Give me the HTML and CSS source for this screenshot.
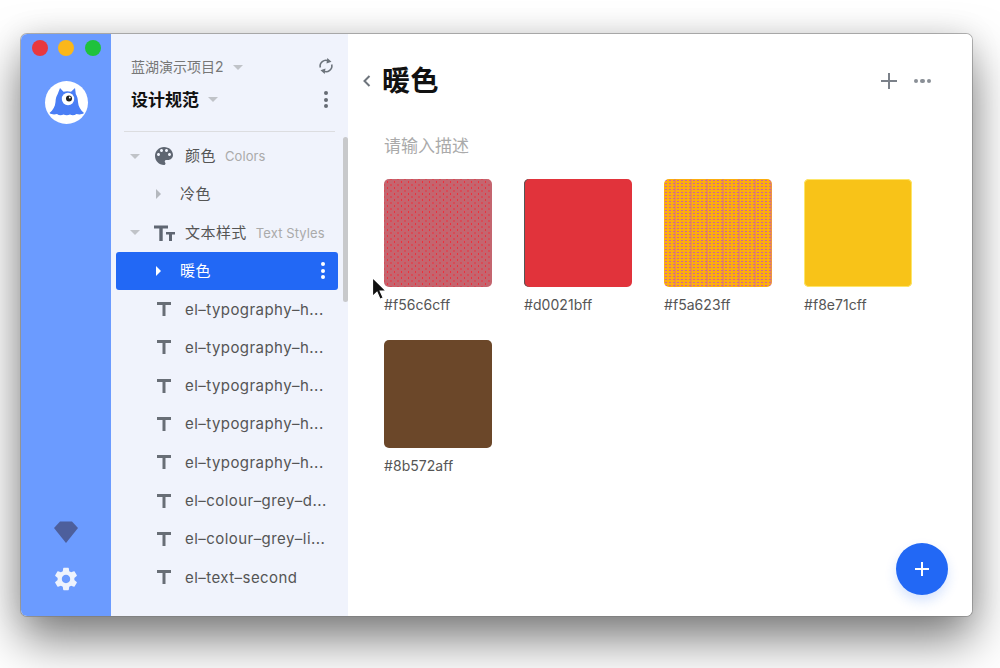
FILE: index.html
```html
<!DOCTYPE html>
<html lang="zh">
<head>
<meta charset="utf-8">
<title>暖色</title>
<link rel="stylesheet" href="styles.css">
</head>
<body>
<div class="window">
  <aside class="rail">
    <div class="lights"><i class="light red"></i><i class="light yellow"></i><i class="light green"></i></div>
    <div class="logo">
      <svg width="43" height="43" viewBox="0 0 43 43"><path fill="#4a7ef5" d="M15 7l3.500 3.800c2.500-.8 5-.8 7.500 0L30 7l.8 6c1.600 2.500 2 5 2.200 8 .3 4.500 2.500 8 6 11-2 1.600-5 1.800-7.500 1-2.200 1.500-4.500 1.500-6.500.5-2 1-4.500 1-6.500 0-2.200 1-4.500 1-6.500-.5-2.500.8-5.500.6-7.500-1 3.500-3 5.700-6.500 6-11 .2-3 .6-5.500 2.200-8z"/><circle cx="23" cy="18" r="6.200" fill="#fff"/><circle cx="24" cy="17.500" r="3" fill="#222"/><circle cx="24.800" cy="16.500" r=".9" fill="#fff"/></svg>
    </div>
    <div class="rail-foot">
      <svg width="26" height="24" viewBox="0 0 26 24"><path fill="#4d5f9c" d="M7 1.500h12L25 8 13 23 1 8z"/></svg>
      <svg width="28" height="28" viewBox="0 0 24 24"><path fill="#eef3fd" d="M19.140 12.940c.04-.3.06-.61.06-.94 0-.32-.02-.64-.07-.94l2.030-1.580c.18-.14.23-.41.12-.61l-1.920-3.320c-.12-.22-.37-.29-.59-.22l-2.390.96c-.5-.38-1.030-.7-1.620-.94l-.36-2.540c-.04-.24-.24-.41-.48-.41h-3.840c-.24 0-.43.17-.47.41l-.36 2.540c-.59.24-1.130.57-1.620.94l-2.390-.96c-.22-.08-.47 0-.59.22L2.740 8.870c-.12.21-.08.47.12.61l2.030 1.580c-.05.3-.09.63-.09.94s.02.64.07.94l-2.030 1.580c-.18.14-.23.41-.12.61l1.920 3.320c.12.22.37.29.59.22l2.390-.96c.5.38 1.030.7 1.620.94l.36 2.540c.05.24.24.41.48.41h3.840c.24 0 .44-.17.47-.41l.36-2.540c.59-.24 1.130-.56 1.620-.94l2.390.96c.22.08.47 0 .59-.22l1.920-3.320c.12-.22.07-.47-.12-.61l-2.010-1.580zM12 15.600c-1.980 0-3.600-1.620-3.600-3.600s1.620-3.600 3.600-3.600 3.600 1.620 3.600 3.600-1.620 3.600-3.600 3.600z"/></svg>
    </div>
  </aside>

  <nav class="side">
    <div class="side-head">
      <div class="project">
        <span class="project-name">蓝湖演示项目2</span><i class="caret-down"></i>
        <svg class="push sync" width="16" height="16" viewBox="0 0 16 16"><path d="M2.300 9.500A5.800 5.800 0 0 1 10.500 2.900M13.700 6.500A5.800 5.800 0 0 1 5.500 13.100" fill="none" stroke="#6d747c" stroke-width="1.600"/><path d="M9.300 0l4.200 3.800-5 1.700zM6.700 16l-4.200-3.800 5-1.700z" fill="#6d747c"/></svg>
      </div>
      <div class="spec">
        <span class="spec-name">设计规范</span><i class="caret-down"></i>
        <span class="kebab push"><i></i><i></i><i></i></span>
      </div>
    </div>
    <div class="tree">
      <div class="row">
        <span class="slot-caret"><i class="caret-down"></i></span>
        <svg class="slot-icon" width="24" height="24" viewBox="0 0 24 24"><path fill="#5f6672" d="M12 3c-4.970 0-9 4.030-9 9s4.030 9 9 9c.83 0 1.500-.67 1.500-1.500 0-.39-.15-.74-.39-1.010-.23-.26-.38-.61-.38-.99 0-.83.67-1.500 1.500-1.500H16c2.760 0 5-2.240 5-5 0-4.420-4.030-8-9-8zm-5.500 9c-.83 0-1.500-.67-1.500-1.500S5.670 9 6.500 9 8 9.670 8 10.500 7.330 12 6.500 12zm3-4C8.670 8 8 7.330 8 6.500S8.670 5 9.500 5s1.500.67 1.500 1.500S10.330 8 9.500 8zm5 0c-.83 0-1.500-.67-1.500-1.500S13.670 5 14.500 5s1.500.67 1.500 1.500S15.330 8 14.500 8zm3 4c-.83 0-1.500-.67-1.500-1.500S16.670 9 17.500 9s1.500.67 1.500 1.500-.67 1.500-1.500 1.500z"/></svg>
        <span class="row-text cjk">颜色</span><span class="row-sub">Colors</span>
      </div>
      <div class="row child">
        <i class="caret-right"></i><span class="row-text cjk">冷色</span>
      </div>
      <div class="row">
        <span class="slot-caret"><i class="caret-down"></i></span>
        <svg class="slot-icon" width="24" height="24" viewBox="0 0 24 24"><path fill="#5f6672" d="M2 4.500h14v3h-5.300V20H7.300V7.500H2zM14 11h9v2.500h-3V20h-3v-6.500h-3z"/></svg>
        <span class="row-text cjk">文本样式</span><span class="row-sub">Text Styles</span>
      </div>
      <div class="row child selected">
        <i class="caret-right"></i><span class="row-text cjk">暖色</span>
        <span class="kebab push"><i></i><i></i><i></i></span>
      </div>
      <div class="row item"><svg class="t" width="16" height="16" viewBox="0 0 16 16"><path d="M1 1h14v3H9.500v11h-3V4H1z"/></svg><span class="row-text">el–typography–h...</span></div>
      <div class="row item"><svg class="t" width="16" height="16" viewBox="0 0 16 16"><path d="M1 1h14v3H9.500v11h-3V4H1z"/></svg><span class="row-text">el–typography–h...</span></div>
      <div class="row item"><svg class="t" width="16" height="16" viewBox="0 0 16 16"><path d="M1 1h14v3H9.500v11h-3V4H1z"/></svg><span class="row-text">el–typography–h...</span></div>
      <div class="row item"><svg class="t" width="16" height="16" viewBox="0 0 16 16"><path d="M1 1h14v3H9.500v11h-3V4H1z"/></svg><span class="row-text">el–typography–h...</span></div>
      <div class="row item"><svg class="t" width="16" height="16" viewBox="0 0 16 16"><path d="M1 1h14v3H9.500v11h-3V4H1z"/></svg><span class="row-text">el–typography–h...</span></div>
      <div class="row item"><svg class="t" width="16" height="16" viewBox="0 0 16 16"><path d="M1 1h14v3H9.500v11h-3V4H1z"/></svg><span class="row-text">el–colour–grey–d...</span></div>
      <div class="row item"><svg class="t" width="16" height="16" viewBox="0 0 16 16"><path d="M1 1h14v3H9.500v11h-3V4H1z"/></svg><span class="row-text">el–colour–grey–li...</span></div>
      <div class="row item"><svg class="t" width="16" height="16" viewBox="0 0 16 16"><path d="M1 1h14v3H9.500v11h-3V4H1z"/></svg><span class="row-text">el–text–second</span></div>
    </div>
    <div class="scrollbar"></div>
  </nav>

  <main class="main">
    <header class="top">
      <svg class="back" width="10" height="14" viewBox="0 0 10 14"><path d="M7.500 2L2.500 7l5 5" fill="none" stroke="#6e747c" stroke-width="2"/></svg>
      <h1 class="title">暖色</h1>
      <svg class="push" width="18" height="18" viewBox="0 0 18 18"><path d="M9 1v16M1 9h16" stroke="#7b8189" stroke-width="2"/></svg>
      <span class="dots"><i></i><i></i><i></i></span>
    </header>
    <p class="desc">请输入描述</p>
    <div class="swatches">
      <figure class="swatch"><div class="chip chip-pink"></div><figcaption>#f56c6cff</figcaption></figure>
      <figure class="swatch"><div class="chip chip-red"></div><figcaption>#d0021bff</figcaption></figure>
      <figure class="swatch"><div class="chip chip-orange"></div><figcaption>#f5a623ff</figcaption></figure>
      <figure class="swatch"><div class="chip chip-yellow"></div><figcaption>#f8e71cff</figcaption></figure>
      <figure class="swatch"><div class="chip chip-brown"></div><figcaption>#8b572aff</figcaption></figure>
    </div>
    <button class="fab" type="button"><svg width="16" height="16" viewBox="0 0 16 16"><path d="M8 1v14M1 8h14" stroke="#fff" stroke-width="2"/></svg></button>
  </main>

  <svg class="cursor" width="16" height="26" viewBox="0 0 16 26"><path d="M1.500 1.500v19l4.500-4.300 3 7 3.200-1.400-3-6.800h6z" fill="#111" stroke="#fff" stroke-width="1.200"/></svg>
</div>
</body>
</html>
```
FILE: styles.css
```css
* { box-sizing: border-box; }
html, body { margin: 0; height: 100%; }
body {
  background: #fff;
  padding: 34px 28px 52px 21px;
  overflow: hidden;
  font-family: Inter, "Noto Sans CJK SC", sans-serif;
  color: #555;
}
i { display: block; font-style: normal; }

.window {
  position: relative;
  display: flex;
  height: 582px;
  border-radius: 6px;
  background: #fff;
  box-shadow: 0 0 0 1px rgba(120,120,120,.55), 0 24px 48px rgba(0,0,0,.5), 0 0 30px rgba(0,0,0,.1);
}

.rail {
  width: 90px;
  flex: none;
  display: flex;
  flex-direction: column;
  align-items: center;
  background: #6b9bff;
  border-radius: 6px 0 0 6px;
}
.lights { display: flex; gap: 10.500px; margin-top: 6px; }
.light { width: 16px; height: 16px; border-radius: 50%; }
.red { background: #e8383f; }
.yellow { background: #fbb71a; }
.green { background: #1fc23c; }
.logo {
  width: 43px; height: 43px;
  margin-top: 25px;
  border-radius: 50%;
  background: #fff;
  overflow: hidden;
}
.logo svg { display: block; }
.rail-foot {
  margin-top: auto;
  margin-bottom: 23px;
  display: flex; flex-direction: column; align-items: center; gap: 21px;
}
.rail-foot svg { display: block; }

.side {
  position: relative;
  width: 237px;
  flex: none;
  background: #f0f3fc;
  overflow: hidden;
}
.side-head {
  margin: 0 13px;
  padding: 22px 0 0 7px;
  height: 98px;
  border-bottom: 1px solid #dcdde0;
}
.project, .spec { display: flex; align-items: center; }
.project { height: 20px; }
.spec { height: 24px; margin-top: 10px; }
.project-name { font-size: 14px; color: #777; }
.spec-name { font-size: 17px; font-weight: 700; color: #111; }
.push { margin-left: auto; }
.sync { margin-right: 1px; }
.caret-down {
  width: 0; height: 0; margin-left: 9px; margin-top: 2px;
  border-left: 5px solid transparent; border-right: 5px solid transparent;
  border-top: 5px solid #c0c3c8;
}
.caret-right {
  width: 0; height: 0;
  border-top: 5px solid transparent; border-bottom: 5px solid transparent;
  border-left: 5px solid #b4b8be;
}
.kebab { display: flex; flex-direction: column; gap: 2.500px; width: 4px; }
.spec .kebab { margin-right: 7px; margin-top: 3px; }
.kebab i { width: 4px; height: 4px; border-radius: 50%; background: #666c74; }

.tree { padding-top: 5px; }
.row {
  display: flex; align-items: center;
  height: 38.270px;
  padding-left: 19px;
  white-space: nowrap;
}
.slot-caret { width: 22px; flex: none; }
.slot-caret .caret-down { margin-left: 0; margin-top: 0; }
.slot-icon { flex: none; margin-right: 9px; }
.row-text { font-size: 15px; color: #555; letter-spacing: .45px; }
.cjk { margin-top: -3px; }
.row-sub { font-size: 13px; color: #aaa; margin-left: 9px; letter-spacing: .1px; }
.child { padding-left: 45px; }
.child .row-text { margin-left: 19px; }
.selected {
  margin: 0 10px 0 5px;
  padding-left: 40px;
  border-radius: 3px;
  background: #2268f5;
}
.selected .caret-right { border-left-color: #fff; }
.selected .row-text { color: #fff; }
.selected .kebab i { background: #fff; }
.selected .kebab { margin-right: 13px; }
.item { padding-left: 45px; }
.t { flex: none; fill: #686e76; margin-right: 13px; }
.scrollbar {
  position: absolute; right: 0; top: 103px;
  width: 5px; height: 165px;
  border-radius: 3px; background: #c8c9cb;
}

.main { position: relative; flex: 1; min-width: 0; border-radius: 0 6px 6px 0; background: #fff; }
.top {
  display: flex; align-items: center;
  height: 38px; margin-top: 28px;
  padding: 0 41px 0 14px;
}
.back { flex: none; margin-right: 10px; }
.title { margin: 0; font-size: 28px; font-weight: 700; color: #111; line-height: 38px; letter-spacing: .5px; }
.dots { display: flex; gap: 2px; margin-left: 15.500px; }
.dots i { width: 4.500px; height: 4.500px; border-radius: 50%; background: #8a8f96; }
.desc { margin: 0; padding: 34px 0 0 36px; font-size: 17px; line-height: 24px; color: #aaa; }
.swatches {
  display: grid;
  grid-template-columns: repeat(4, 108px);
  column-gap: 32px;
  row-gap: 18px;
  margin: 21px 0 0 36px;
}
.swatch { margin: 0; }
.chip { width: 108px; height: 108px; border-radius: 5px; }
.swatch figcaption { height: 35px; padding-top: 9px; font-size: 14px; line-height: 18px; color: #555; letter-spacing: .05px; }
.chip-pink {
  background-color: #c4656f;
  background-image:
    radial-gradient(circle, #ee2f3c 0 .7px, transparent 1px),
    radial-gradient(circle, #ee2f3c 0 .7px, transparent 1px);
  background-size: 7px 6px;
  background-position: 0 0, 3.500px 3px;
}
.chip-red { background: #e1333b; box-shadow: inset 1px 0 0 #555; }
.chip-orange {
  background-color: #fbae0f;
  background-image:
    radial-gradient(circle, #d0609f 0 .8px, transparent 1.100px),
    repeating-linear-gradient(90deg, transparent 0 10px, rgba(208,96,159,.35) 10px 12px, transparent 12px 16px);
  background-size: 4px 3px, auto;
}
.chip-yellow { background: #f8c318; box-shadow: inset 0 0 0 1px #fde66a; }
.chip-brown { background: #6b4729; }

.fab {
  position: absolute; right: 24px; bottom: 21px;
  width: 52px; height: 52px;
  padding: 0; border: 0; border-radius: 50%;
  background: #2268f5;
  display: flex; align-items: center; justify-content: center;
  box-shadow: 0 6px 12px rgba(34,104,245,.18);
}
.cursor { position: absolute; left: 350px; top: 242px; }
```
